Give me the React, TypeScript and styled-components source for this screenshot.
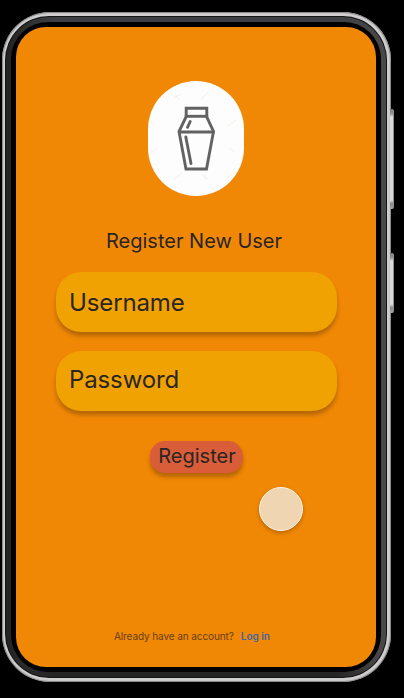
import React from "react";
import styled, { createGlobalStyle } from "styled-components";

const GlobalStyle = createGlobalStyle`
  * { box-sizing: border-box; }
  body {
    margin: 0;
    background: #000;
    overflow: hidden;
    font-family: Inter, "Liberation Sans", sans-serif;
  }
`;

const Stage = styled.main`
  width: 404px;
  height: 698px;
  padding: 12px 0 0 1.5px;
  display: flex;
  align-items: flex-start;
  background: #000;
`;

const Shell = styled.div`
  width: 389.5px;
  height: 670px;
  flex: none;
  padding: 4px 4px 4px 3.5px;
  border-radius: 48px;
  background: #d0cdce;
  box-shadow: inset 0 0 1px 1px #858585;
`;

const Bezel = styled.div`
  height: 100%;
  padding: 1px;
  border-radius: 44px;
  background: #151515;
`;

const Rim = styled.div`
  height: 100%;
  padding: 5px;
  border-radius: 43px;
  background: linear-gradient(90deg, #222 0, #2a2a2a 12px, transparent 50px, transparent calc(100% - 50px), #484848 calc(100% - 6px)),
    linear-gradient(#3d3f42 0, #2c2c2c 50%, #242424 100%);
`;

const Glass = styled.div`
  height: 100%;
  padding: 5px;
  border-radius: 37px;
  background: #000;
`;

const Screen = styled.section`
  width: 360px;
  height: 640px;
  border-radius: 30px;
  background: #f18805;
  display: flex;
  flex-direction: column;
  align-items: center;
  padding-top: 54px;
  color: #292522;
`;

const SideKeys = styled.div`
  width: 4px;
  flex: none;
  padding-top: 97px;
  margin-left: -1px;
  display: flex;
  flex-direction: column;
  gap: 44px;
`;

const SideKey = styled.div<{ $length: number }>`
  height: ${(p) => p.$length}px;
  border-radius: 0 2px 2px 0;
  border-right: 1px solid #909090;
  background: linear-gradient(#777 0, #999 5px, #dadada 8px, #dadada calc(100% - 9px), #858585 calc(100% - 5px), #aaa 100%);
`;

const Logo = styled.div`
  width: 96px;
  height: 115px;
  flex: none;
  border-radius: 48px;
  background: #fdfdfd;

  svg { display: block; }
`;

const Title = styled.h1`
  margin: 33px 4px 0 0;
  height: 24px;
  width: 176px;
  font-size: 20px;
  line-height: 24px;
  font-weight: 400;
  white-space: nowrap;
`;

const Form = styled.form`
  width: 281px;
  margin: 19px 0 0 1px;
  display: flex;
  flex-direction: column;
  align-items: center;
`;

const Field = styled.div<{ $lift?: number }>`
  width: 281px;
  height: 60px;
  margin-bottom: 19px;
  padding: ${(p) => 16 - (p.$lift ?? 0)}px 13px 0;
  border-radius: 25px;
  background: #f0a202;
  box-shadow: 0 4px 4px rgba(0, 0, 0, 0.25);
  font-size: 24px;
  line-height: 29px;
  letter-spacing: -0.12px;
`;

const RegisterButton = styled.button`
  width: 93px;
  height: 32px;
  margin-top: 11px;
  padding: 0 0 2px 1px;
  border: 0;
  border-radius: 15px;
  background: #d95d39;
  box-shadow: 0 4px 4px rgba(0, 0, 0, 0.25);
  color: #292522;
  font: 400 20px/24px Inter, "Liberation Sans", sans-serif;
`;

const TouchPoint = styled.div`
  width: 44px;
  height: 44px;
  margin: 14px 0 0 170px;
  flex: none;
  border: 1px solid #fff3e3;
  border-radius: 50%;
  background: #efd5b2;
  box-shadow: 0 2px 4px rgba(0, 0, 0, 0.25);
`;

const Footer = styled.p`
  width: 156px;
  margin: 99px 0 0 -8px;
  display: flex;
  justify-content: space-between;
  font-size: 10px;
  line-height: 12px;
  letter-spacing: -0.1px;
  white-space: nowrap;
  color: #66401a;
`;

const LoginLink = styled.a`
  color: #4266a5;
  font-weight: 600;
  letter-spacing: 0;
`;

const ShakerIcon = () => (
  <svg width="96" height="115" viewBox="0 0 96 115" fill="none">
    <g stroke="#f5f2ea" strokeWidth="1">
      <path d="M53 18L61 11M25 17L33 13M80 45L88 39M2 72L9 67M25 99L34 92M79 98L87 92M54 94L60 98M57 93L57 99M2 40L7 44M28 14L31 19M82 67L86 71" />
    </g>
    <g stroke="#626262" strokeWidth="2.9">
      <path d="M38.2 35V27.3H58.8V35" />
      <path d="M36.8 35.3H60.2" />
      <path d="M38.3 35.3L31 50.5L38 88H58.5L65.5 50.5L58.5 35.3" />
      <path d="M30 51H66.5" />
      <path d="M42.2 40.5L39.5 46.3M37.8 56L43 82.5" strokeLinecap="round" />
    </g>
  </svg>
);

export default function App() {
  return (
    <>
      <GlobalStyle />
      <Stage>
        <Shell>
          <Bezel>
            <Rim>
              <Glass>
                <Screen>
                  <Logo>
                    <ShakerIcon />
                  </Logo>
                  <Title>Register New User</Title>
                  <Form>
                    <Field>Username</Field>
                    <Field $lift={2}>Password</Field>
                    <RegisterButton type="button">Register</RegisterButton>
                  </Form>
                  <TouchPoint />
                  <Footer>
                    <span>Already have an account?</span>
                    <LoginLink>Log in</LoginLink>
                  </Footer>
                </Screen>
              </Glass>
            </Rim>
          </Bezel>
        </Shell>
        <SideKeys>
          <SideKey $length={100} />
          <SideKey $length={60} />
        </SideKeys>
      </Stage>
    </>
  );
}
